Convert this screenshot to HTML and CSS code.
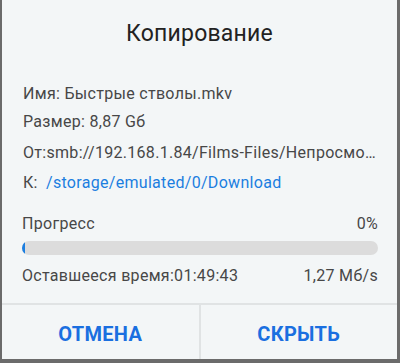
FILE: index.html
```html
<!DOCTYPE html>
<html>
<head>
<meta charset="utf-8">
<link rel="stylesheet" href="styles.css">
</head>
<body>
<div class="dialog">
  <div class="title">Копирование</div>
  <div class="info">
    <div class="row r-name">Имя: Быстрые стволы.mkv</div>
    <div class="row r-size">Размер: 8,87 Gб</div>
    <div class="row r-from">От:smb://192.168.1.84/Films-Files/Непросмо…</div>
    <div class="row r-to">К: <span class="link">/storage/emulated/0/Download</span></div>
  </div>
  <div class="progress">
    <div class="split"><span>Прогресс</span><span>0%</span></div>
    <div class="bar"><div class="fill"></div></div>
    <div class="split"><span>Оставшееся время:01:49:43</span><span>1,27 Мб/s</span></div>
  </div>
  <div class="buttons">
    <div class="btn">ОТМЕНА</div>
    <div class="btn">СКРЫТЬ</div>
  </div>
</div>
</body>
</html>
```
FILE: styles.css
```css
html, body {
  margin: 0;
  padding: 0;
  width: 400px;
  height: 363px;
  background: #6b6b6b;
  overflow: hidden;
}
.dialog {
  margin-left: 2px;
  width: 395px;
  height: 359px;
  background: #f3f6f7;
  font-family: Roboto, "Liberation Sans", sans-serif;
  color: #474747;
  display: flex;
  flex-direction: column;
}
.title {
  height: 66px;
  display: flex;
  align-items: center;
  justify-content: center;
  font-size: 23px;
  letter-spacing: 0.2px;
  color: #222;
}
.info {
  padding: 18px 18px 0 21px;
  font-size: 16px;
  letter-spacing: 0.3px;
}
.row {
  line-height: 20px;
  white-space: nowrap;
}
.r-size { margin-top: 8px; }
.r-from { margin-top: 11px; }
.r-to { margin-top: 10px; }
.link {
  color: #1b7ee0;
  margin-left: 4px;
}
.progress {
  padding: 21px 19px 0 20px;
  font-size: 16px;
  letter-spacing: 0.3px;
}
.split {
  display: flex;
  justify-content: space-between;
  line-height: 20px;
}
.bar {
  margin-top: 7px;
  height: 14px;
  border-radius: 7px;
  background: #dcdcdc;
  overflow: hidden;
}
.fill {
  width: 3px;
  height: 100%;
  background: #1b7ee0;
  border-radius: 7px 0 0 7px;
}
.bar + .split { margin-top: 11px; }
.buttons {
  margin-top: auto;
  height: 54px;
  border-top: 2px solid #e0e3e4;
  display: flex;
}
.btn {
  flex: 1;
  display: flex;
  align-items: center;
  justify-content: center;
  padding-top: 4px;
  color: #1a6fe0;
  font-weight: bold;
  font-size: 20px;
  letter-spacing: 0.3px;
}
.btn + .btn {
  border-left: 2px solid #e0e3e4;
}
```
